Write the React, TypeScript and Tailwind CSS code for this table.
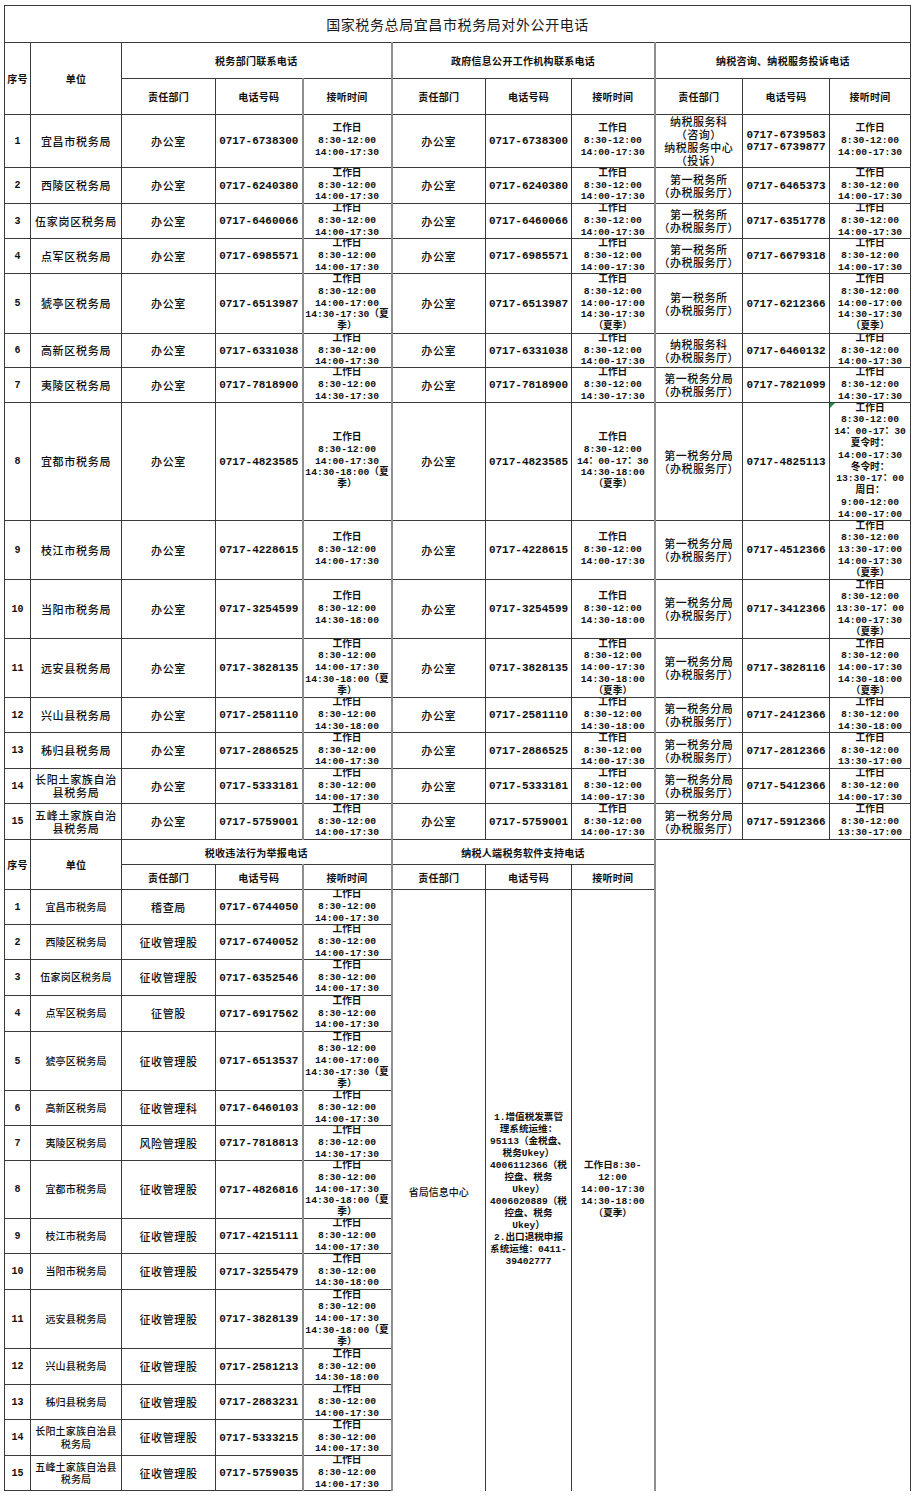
import { clsx } from 'clsx';
import type { ReactNode } from 'react';

const mono = "font-['Liberation_Mono','Noto_Sans_CJK_SC',monospace]";
const cjk = "font-['Noto_Sans_CJK_SC','Liberation_Sans',sans-serif]";

const T1 = ['工作日', '8:30-12:00', '14:00-17:30'];
const T2 = ['工作日', '8:30-12:00', '14:30-17:30'];
const T3 = ['工作日', '8:30-12:00', '14:30-18:00'];
const T4 = ['工作日', '8:30-12:00', '13:30-17:00'];
const FEN = ['第一税务分局', '（办税服务厅）'];
const SUO = ['第一税务所', '（办税服务厅）'];

type Row = {
  no: number;
  h: string;
  unit: string[];
  p1: string;
  t1: string[];
  t2: string[];
  d3: string[];
  p3: string[];
  t3: string[];
};

const rows: Row[] = [
  { no: 1, h: 'h-[52px]', unit: ['宜昌市税务局'], p1: '0717-6738300', t1: T1, t2: T1, d3: ['纳税服务科', '（咨询）', '纳税服务中心', '（投诉）'], p3: ['0717-6739583', '0717-6739877'], t3: T1 },
  { no: 2, h: 'h-[35px]', unit: ['西陵区税务局'], p1: '0717-6240380', t1: T1, t2: T1, d3: SUO, p3: ['0717-6465373'], t3: T1 },
  { no: 3, h: 'h-[34px]', unit: ['伍家岗区税务局'], p1: '0717-6460066', t1: T1, t2: T1, d3: SUO, p3: ['0717-6351778'], t3: T1 },
  { no: 4, h: 'h-[34px]', unit: ['点军区税务局'], p1: '0717-6985571', t1: T1, t2: T1, d3: SUO, p3: ['0717-6679318'], t3: T1 },
  { no: 5, h: 'h-[59px]', unit: ['猇亭区税务局'], p1: '0717-6513987', t1: ['工作日', '8:30-12:00', '14:00-17:00', '14:30-17:30（夏', '季）'], t2: ['工作日', '8:30-12:00', '14:00-17:00', '14:30-17:30', '（夏季）'], d3: SUO, p3: ['0717-6212366'], t3: ['工作日', '8:30-12:00', '14:00-17:00', '14:30-17:30', '（夏季）'] },
  { no: 6, h: 'h-[33px]', unit: ['高新区税务局'], p1: '0717-6331038', t1: T1, t2: T1, d3: ['纳税服务科', '（办税服务厅）'], p3: ['0717-6460132'], t3: T1 },
  { no: 7, h: 'h-[34px]', unit: ['夷陵区税务局'], p1: '0717-7818900', t1: T2, t2: T2, d3: FEN, p3: ['0717-7821099'], t3: T2 },
  { no: 8, h: 'h-[117px]', unit: ['宜都市税务局'], p1: '0717-4823585', t1: ['工作日', '8:30-12:00', '14:00-17:30', '14:30-18:00（夏', '季）'], t2: ['工作日', '8:30-12:00', '14：00-17：30', '14:30-18:00', '（夏季）'], d3: FEN, p3: ['0717-4825113'], t3: ['工作日', '8:30-12:00', '14：00-17：30', '夏令时：', '14:00-17:30', '冬令时：', '13:30-17：00', '周日：', '9:00-12:00', '14:00-17:00'] },
  { no: 9, h: 'h-[58px]', unit: ['枝江市税务局'], p1: '0717-4228615', t1: T1, t2: T1, d3: FEN, p3: ['0717-4512366'], t3: ['工作日', '8:30-12:00', '13:30-17:00', '14:00-17:30', '（夏季）'] },
  { no: 10, h: 'h-[58px]', unit: ['当阳市税务局'], p1: '0717-3254599', t1: T3, t2: T3, d3: FEN, p3: ['0717-3412366'], t3: ['工作日', '8:30-12:00', '13:30-17：00', '14:00-17:30', '（夏季）'] },
  { no: 11, h: 'h-[58px]', unit: ['远安县税务局'], p1: '0717-3828135', t1: ['工作日', '8:30-12:00', '14:00-17:30', '14:30-18:00（夏', '季）'], t2: ['工作日', '8:30-12:00', '14:00-17:30', '14:30-18:00', '（夏季）'], d3: FEN, p3: ['0717-3828116'], t3: ['工作日', '8:30-12:00', '14:00-17:30', '14:30-18:00', '（夏季）'] },
  { no: 12, h: 'h-[34px]', unit: ['兴山县税务局'], p1: '0717-2581110', t1: T3, t2: T3, d3: FEN, p3: ['0717-2412366'], t3: T3 },
  { no: 13, h: 'h-[35px]', unit: ['秭归县税务局'], p1: '0717-2886525', t1: T1, t2: T1, d3: FEN, p3: ['0717-2812366'], t3: T4 },
  { no: 14, h: 'h-[34px]', unit: ['长阳土家族自治', '县税务局'], p1: '0717-5333181', t1: T1, t2: T1, d3: FEN, p3: ['0717-5412366'], t3: T1 },
  { no: 15, h: 'h-[35px]', unit: ['五峰土家族自治', '县税务局'], p1: '0717-5759001', t1: T1, t2: T1, d3: FEN, p3: ['0717-5912366'], t3: T4 },
];

type Row2 = { no: number; h: string; unit: string[]; dept: string; phone: string; time: string[] };

const XIA = ['工作日', '8:30-12:00', '14:00-17:30', '14:30-18:00（夏', '季）'];

const rows2: Row2[] = [
  { no: 1, h: 'h-[34px]', unit: ['宜昌市税务局'], dept: '稽查局', phone: '0717-6744050', time: T1 },
  { no: 2, h: 'h-[34px]', unit: ['西陵区税务局'], dept: '征收管理股', phone: '0717-6740052', time: T1 },
  { no: 3, h: 'h-[35px]', unit: ['伍家岗区税务局'], dept: '征收管理股', phone: '0717-6352546', time: T1 },
  { no: 4, h: 'h-[35px]', unit: ['点军区税务局'], dept: '征管股', phone: '0717-6917562', time: T1 },
  { no: 5, h: 'h-[58px]', unit: ['猇亭区税务局'], dept: '征收管理股', phone: '0717-6513537', time: ['工作日', '8:30-12:00', '14:00-17:00', '14:30-17:30（夏', '季）'] },
  { no: 6, h: 'h-[34px]', unit: ['高新区税务局'], dept: '征收管理科', phone: '0717-6460103', time: T1 },
  { no: 7, h: 'h-[34px]', unit: ['夷陵区税务局'], dept: '风险管理股', phone: '0717-7818813', time: T2 },
  { no: 8, h: 'h-[57px]', unit: ['宜都市税务局'], dept: '征收管理股', phone: '0717-4826816', time: XIA },
  { no: 9, h: 'h-[34px]', unit: ['枝江市税务局'], dept: '征收管理股', phone: '0717-4215111', time: T1 },
  { no: 10, h: 'h-[35px]', unit: ['当阳市税务局'], dept: '征收管理股', phone: '0717-3255479', time: T3 },
  { no: 11, h: 'h-[58px]', unit: ['远安县税务局'], dept: '征收管理股', phone: '0717-3828139', time: XIA },
  { no: 12, h: 'h-[35px]', unit: ['兴山县税务局'], dept: '征收管理股', phone: '0717-2581213', time: T3 },
  { no: 13, h: 'h-[34px]', unit: ['秭归县税务局'], dept: '征收管理股', phone: '0717-2883231', time: T1 },
  { no: 14, h: 'h-[35px]', unit: ['长阳土家族自治县', '税务局'], dept: '征收管理股', phone: '0717-5333215', time: T1 },
  { no: 15, h: 'h-[34px]', unit: ['五峰土家族自治县', '税务局'], dept: '征收管理股', phone: '0717-5759035', time: T1 },
];

const softText = [
  '1.增值税发票管',
  '理系统运维：',
  '95113（金税盘、',
  '税务Ukey）',
  '4006112366（税',
  '控盘、税务',
  'Ukey）',
  '4006020889（税',
  '控盘、税务',
  'Ukey）',
  '2.出口退税申报',
  '系统运维：0411-',
  '39402777',
];

const softTime = ['工作日8:30-', '12:00', '14:00-17:30', '14:30-18:00', '（夏季）'];

const cols = ['w-[26px]', 'w-[91px]', 'w-[94px]', 'w-[87px]', 'w-[89px]', 'w-[94px]', 'w-[86px]', 'w-[83px]', 'w-[88px]', 'w-[87px]', 'w-[81px]'];

// gray double-ish rule the sheet shows at a few column edges
const gray = 'border-l-2 border-l-[#8e8e8e]';

function Td({ children, className, colSpan, rowSpan }: { children?: ReactNode; className?: string; colSpan?: number; rowSpan?: number }) {
  return (
    <td colSpan={colSpan} rowSpan={rowSpan} className={clsx('border border-[#3a3a3a] p-0 text-center align-middle', className)}>
      {children}
    </td>
  );
}

function Box({ h, children, className }: { h: string; children: ReactNode; className?: string }) {
  return <div className={clsx('flex flex-col items-center justify-center overflow-hidden', h, className)}>{children}</div>;
}

function Lines({ lines, className }: { lines: string[]; className?: string }) {
  return (
    <>
      {lines.map((l, i) => (
        <span key={i} className={clsx('block whitespace-nowrap', className)}>
          {l}
        </span>
      ))}
    </>
  );
}

const txNo = `${mono} text-[10px] font-bold`;
const txName = `${cjk} text-[11px] font-medium tracking-[0.7px] leading-[13px]`;
const txName2 = `${cjk} text-[10px] font-medium tracking-[0.2px] leading-[12.5px]`;
const txDept = `${cjk} text-[11px] font-medium tracking-[0.6px]`;
const txPhone = `${mono} text-[11px] font-bold leading-[12px]`;
const txTime = `${mono} text-[9.7px] font-bold leading-[11.8px]`;
const txHead = `${cjk} text-[10px] font-semibold tracking-[0.3px]`;
const txD3 = `${cjk} text-[11px] font-medium tracking-[0.5px] leading-[13px]`;

export default function App() {
  return (
    <div className="min-h-[1496px] bg-white pl-[4px] pt-[5px] text-[#111]">
      <table className="w-[906px] table-fixed border-collapse">
        <colgroup>
          {cols.map((c, i) => (
            <col key={i} className={c} />
          ))}
        </colgroup>
        <tbody>
          <tr>
            <Td colSpan={11}>
              <Box h="h-[36px]">
                <span className={`${cjk} text-[14px] tracking-[0.6px] text-[#1a1a1a]`}>国家税务总局宜昌市税务局对外公开电话</span>
              </Box>
            </Td>
          </tr>
          <tr>
            <Td rowSpan={2}>
              <Box h="h-[71px]" className={txHead}>序号</Box>
            </Td>
            <Td rowSpan={2}>
              <Box h="h-[71px]" className={txHead}>单位</Box>
            </Td>
            <Td colSpan={3}>
              <Box h="h-[35px]" className={txHead}>税务部门联系电话</Box>
            </Td>
            <Td colSpan={3} className={gray}>
              <Box h="h-[35px]" className={txHead}>政府信息公开工作机构联系电话</Box>
            </Td>
            <Td colSpan={3} className={gray}>
              <Box h="h-[35px]" className={txHead}>纳税咨询、纳税服务投诉电话</Box>
            </Td>
          </tr>
          <tr>
            {['责任部门', '电话号码', '接听时间', '责任部门', '电话号码', '接听时间', '责任部门', '电话号码', '接听时间'].map((t, i) => (
              <Td key={i} className={i === 2 || i === 3 || i === 6 ? gray : undefined}>
                <Box h="h-[35px]" className={txHead}>{t}</Box>
              </Td>
            ))}
          </tr>

          {rows.map((r) => (
            <tr key={r.no}>
              <Td>
                <Box h={r.h} className={txNo}>{r.no}</Box>
              </Td>
              <Td>
                <Box h={r.h}><Lines lines={r.unit} className={txName} /></Box>
              </Td>
              <Td>
                <Box h={r.h} className={txDept}>办公室</Box>
              </Td>
              <Td>
                <Box h={r.h} className={txPhone}>{r.p1}</Box>
              </Td>
              <Td className={gray}>
                <Box h={r.h}><Lines lines={r.t1} className={txTime} /></Box>
              </Td>
              <Td className={gray}>
                <Box h={r.h} className={txDept}>办公室</Box>
              </Td>
              <Td>
                <Box h={r.h} className={txPhone}>{r.p1}</Box>
              </Td>
              <Td>
                <Box h={r.h}><Lines lines={r.t2} className={txTime} /></Box>
              </Td>
              <Td className={gray}>
                <Box h={r.h}><Lines lines={r.d3} className={txD3} /></Box>
              </Td>
              <Td>
                <Box h={r.h}><Lines lines={r.p3} className={txPhone} /></Box>
              </Td>
              <Td className="relative">
                {r.no === 8 && (
                  <span className="absolute left-0 top-0 h-0 w-0 border-r-[5px] border-t-[5px] border-r-transparent border-t-[#1f8f3c]" />
                )}
                <Box h={r.h}><Lines lines={r.t3} className={txTime} /></Box>
              </Td>
            </tr>
          ))}

          <tr>
            <Td rowSpan={2}>
              <Box h="h-[49px]" className={txHead}>序号</Box>
            </Td>
            <Td rowSpan={2}>
              <Box h="h-[49px]" className={txHead}>单位</Box>
            </Td>
            <Td colSpan={3}>
              <Box h="h-[24px]" className={txHead}>税收违法行为举报电话</Box>
            </Td>
            <Td colSpan={3} className={gray}>
              <Box h="h-[24px]" className={txHead}>纳税人端税务软件支持电话</Box>
            </Td>
            <td colSpan={3} rowSpan={17} className="border-0 border-r border-l-2 border-r-[#3a3a3a] border-l-[#8e8e8e] p-0" />
          </tr>
          <tr>
            {['责任部门', '电话号码', '接听时间', '责任部门', '电话号码', '接听时间'].map((t, i) => (
              <Td key={i} className={i === 2 || i === 3 ? gray : undefined}>
                <Box h="h-[24px]" className={txHead}>{t}</Box>
              </Td>
            ))}
          </tr>

          {rows2.map((r) => (
            <tr key={r.no}>
              <Td>
                <Box h={r.h} className={txNo}>{r.no}</Box>
              </Td>
              <Td>
                <Box h={r.h}><Lines lines={r.unit} className={txName2} /></Box>
              </Td>
              <Td>
                <Box h={r.h} className={txDept}>{r.dept}</Box>
              </Td>
              <Td>
                <Box h={r.h} className={txPhone}>{r.phone}</Box>
              </Td>
              <Td className={gray}>
                <Box h={r.h}><Lines lines={r.time} className={txTime} /></Box>
              </Td>
              {r.no === 1 && (
                <>
                  <Td rowSpan={15} className={clsx(gray, 'border-b-0')}>
                    <span className={`${cjk} text-[10px] font-medium`}>省局信息中心</span>
                  </Td>
                  <Td rowSpan={15} className="border-b-0">
                    <div className={`${mono} flex flex-col items-center text-[9.6px] font-bold leading-[12px]`}>
                      <Lines lines={softText} />
                    </div>
                  </Td>
                  <Td rowSpan={15} className="border-b-0">
                    <div className={`${mono} flex flex-col items-center text-[9.6px] font-bold leading-[12px]`}>
                      <Lines lines={softTime} />
                    </div>
                  </Td>
                </>
              )}
            </tr>
          ))}
        </tbody>
      </table>
    </div>
  );
}
